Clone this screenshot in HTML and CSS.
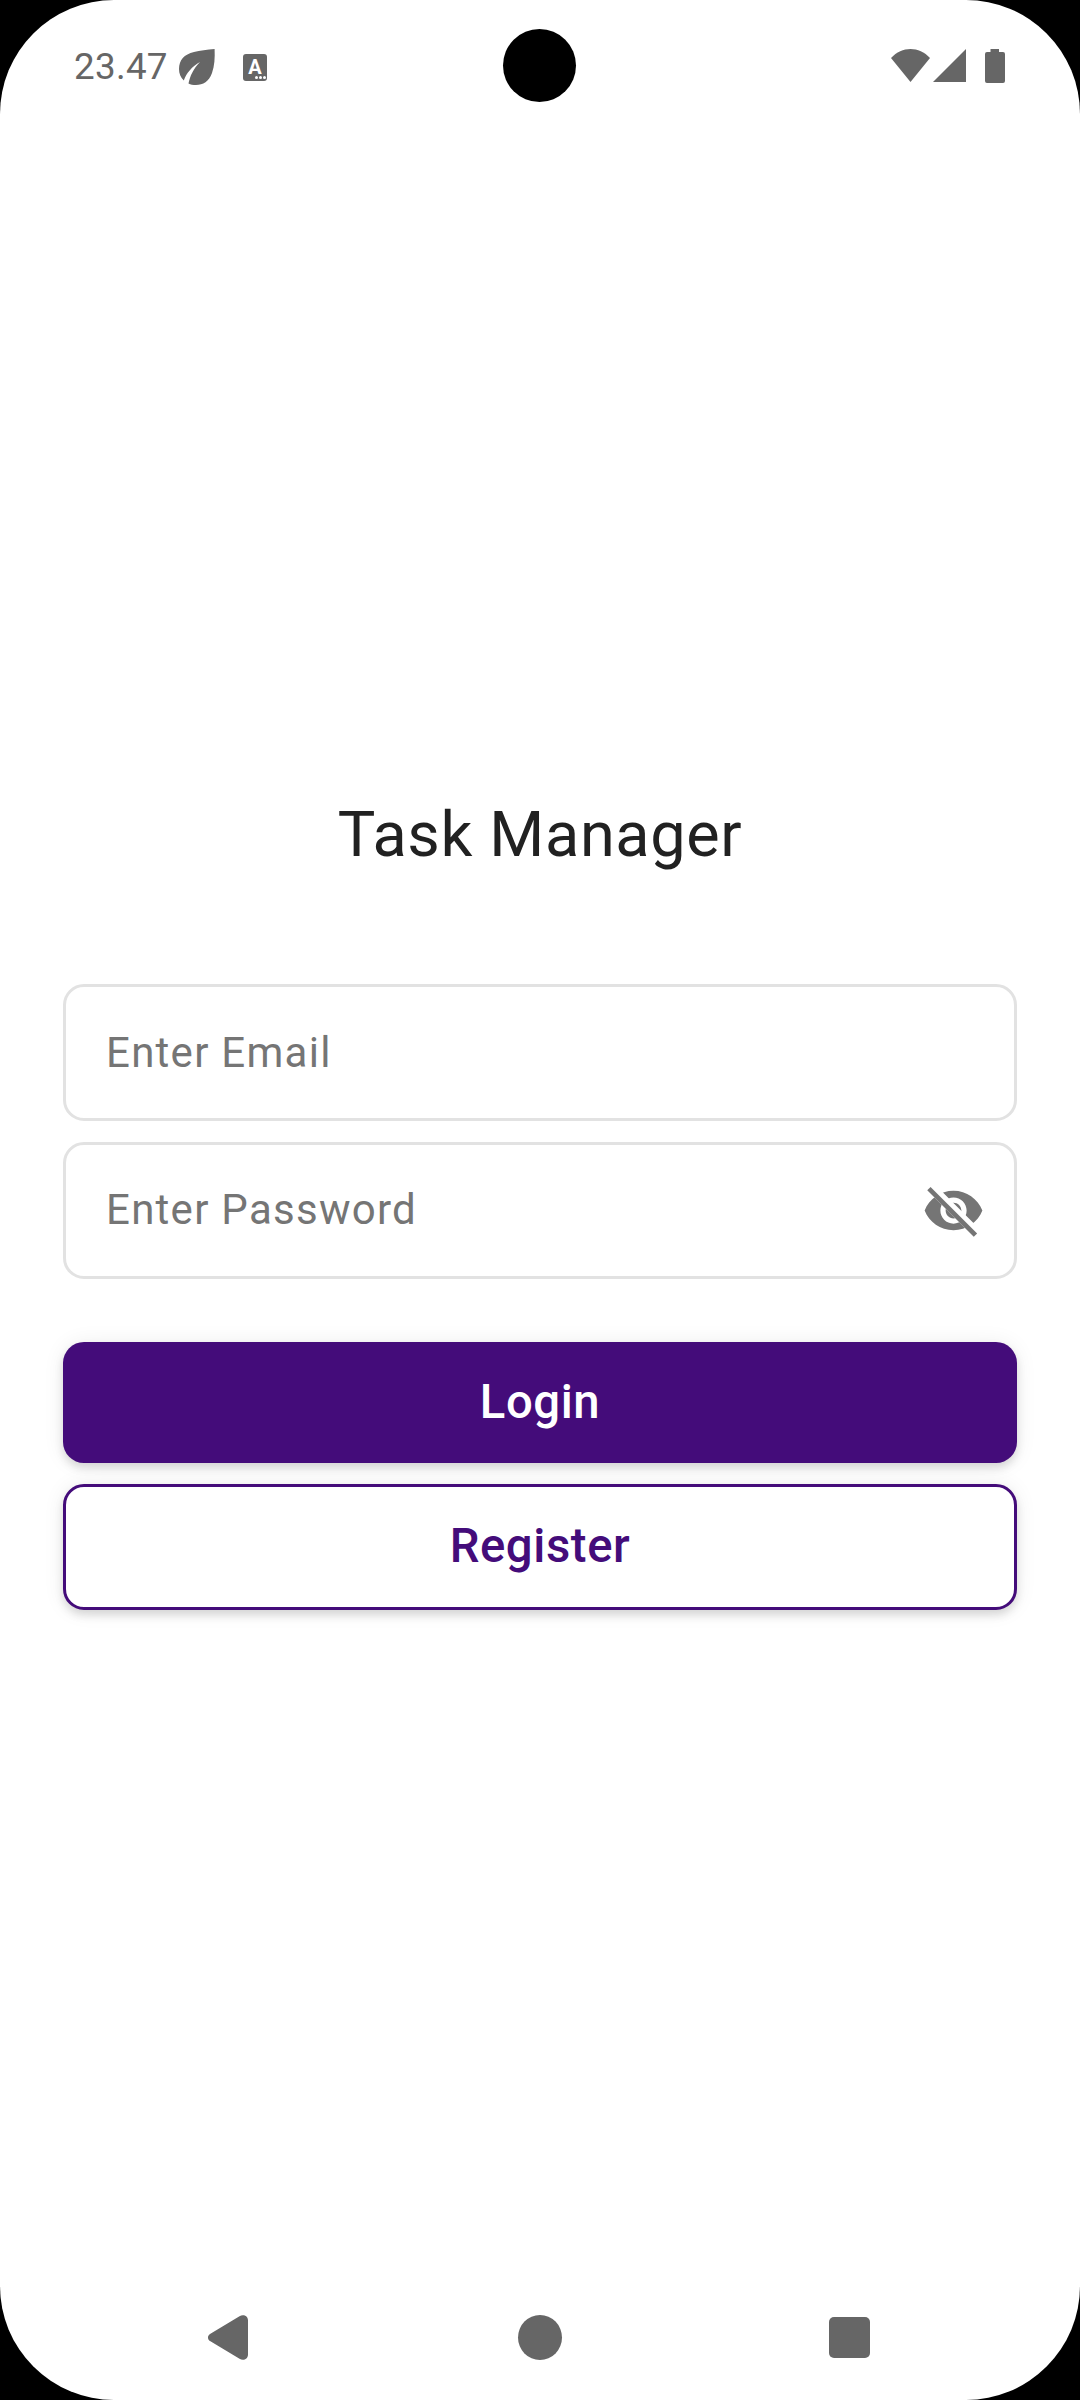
FILE: index.html
```
<!DOCTYPE html>
<html lang="en">
<head>
<meta charset="utf-8">
<title>Task Manager</title>
<link rel="stylesheet" href="styles.css">
</head>
<body>
<div class="screen">
  <header class="status-bar">
    <div class="status-left">
      <span class="clock">23.47</span>
      <svg class="leaf" viewBox="0 0 36 36"><path d="M35.600 0C36 9 35.500 17 33 24C30 32.500 24 36 17 36C14 36 11.500 35.500 9.500 34.500C11 27 14.500 19.500 21 13C13 17.500 7.500 24 4.800 31.500C1.500 28.500 0 24.500 0 20C0 11 5 5.500 15 3C21 1.500 28 .6 35.600 0Z"/></svg>
      <span class="keyboard-badge"><span class="badge-letter">A</span><span class="badge-dots"><i></i><i></i><i></i></span></span>
    </div>
    <div class="camera"></div>
    <div class="status-right">
      <svg class="wifi" viewBox="0 0 39 33"><path d="M0 9C11-3 28-3 39 9L19.500 33Z"/></svg>
      <svg class="signal" viewBox="0 0 33 33"><path d="M33 0V33H0Z"/></svg>
      <svg class="battery" viewBox="0 0 20 34"><path d="M5.500 0H14V3H18Q20 3 20 5V32Q20 34 18 34H2Q0 34 0 32V5Q0 3 2 3H5.500Z"/></svg>
    </div>
  </header>

  <main class="login">
    <h1 class="title">Task Manager</h1>
    <form class="form">
      <div class="field"><input class="input" type="email" placeholder="Enter Email"></div>
      <div class="field">
        <input class="input input-password" type="password" placeholder="Enter Password">
        <svg class="eye" viewBox="0 0 24 24">
          <defs><clipPath id="eye-clip"><path clip-rule="evenodd" d="M0 0H24V24H0ZM2 4.270L19.730 22L22.270 19.460L4.540 1.730Z"/></clipPath></defs>
          <path clip-path="url(#eye-clip)" d="M12 4.500C7 4.500 2.730 7.610 1 12c1.730 4.390 6 7.500 11 7.500s9.270-3.110 11-7.500c-1.730-4.390-6-7.500-11-7.500zM12 17c-2.760 0-5-2.240-5-5s2.240-5 5-5 5 2.240 5 5-2.240 5-5 5zM12 9c-1.660 0-3 1.340-3 3s1.340 3 3 3 3-1.340 3-3-1.340-3-3-3z"/>
          <path d="M2 4.270L3.270 3L21 20.730L19.730 22Z"/>
        </svg>
      </div>
      <button class="button button-primary" type="button">Login</button>
      <button class="button button-outline" type="button">Register</button>
    </form>
  </main>

  <nav class="nav-bar">
    <svg class="nav-back" viewBox="0 0 40 45"><path d="M31.500 1.200C35 -1 40 .5 40 5.500V39.500C40 44.500 35 46 31.500 43.800L2 26C-.7 24-.7 21 2 19Z"/></svg>
    <span class="nav-home"></span>
    <span class="nav-recent"></span>
  </nav>
</div>
</body>
</html>
```
FILE: styles.css
```
* { box-sizing: border-box; }

body {
  margin: 0;
  background: #000;
  font-family: Roboto, sans-serif;
}

.screen {
  width: 1080px;
  height: 2400px;
  display: flex;
  flex-direction: column;
  background: #fff;
  border-radius: 114px;
  overflow: hidden;
}

svg { display: block; fill: currentColor; }

.status-bar {
  height: 131px;
  display: grid;
  grid-template-columns: 1fr 73px 1fr;
  align-items: center;
  padding: 0 75px 0 74px;
  color: #666;
}

.status-left { display: flex; align-items: center; }
.clock { width: 105px; padding-top: 2px; font-size: 36.750px; line-height: 44px; letter-spacing: 0.3px; }
.leaf { width: 36px; height: 36px; margin-top: 3px; }

.keyboard-badge {
  width: 24px;
  height: 27px;
  margin: 3px 0 0 28px;
  display: flex;
  flex-direction: column;
  align-items: center;
  border-radius: 3px;
  background: #666;
  color: #fff;
}

.badge-letter { height: 22px; font-size: 20px; line-height: 26px; font-weight: 700; }
.badge-dots { display: flex; align-self: flex-end; gap: 1px; margin-right: 1px; }
.badge-dots i { width: 3px; height: 3px; border-radius: 50%; background: #fff; }

.camera { width: 73px; height: 73px; border-radius: 50%; background: #000; }

.status-right { display: flex; justify-content: flex-end; align-items: flex-start; }
.wifi { width: 39px; height: 33px; }
.signal { width: 33px; height: 33px; margin: 0 19px 0 3px; }
.battery { width: 20px; height: 34px; }

.login { flex: 1; padding: 662px 63px 0; }

.title {
  margin: 0;
  text-align: center;
  font-size: 63px;
  line-height: 84px;
  font-weight: 400;
  letter-spacing: 0.65px;
  color: #212121;
}

.form { display: flex; flex-direction: column; margin-top: 107px; }

.field {
  height: 137px;
  margin-bottom: 21px;
  display: flex;
  align-items: center;
  padding: 0 29px 0 40px;
  border: 3px solid #e2e2e2;
  border-radius: 21px;
}

.input {
  flex: 1;
  height: 60px;
  padding: 0;
  border: 0;
  outline: 0;
  background: transparent;
  font: 400 42px/60px Roboto, sans-serif;
  letter-spacing: 1.270px;
}

.input-password { margin-bottom: 2px; }
.input::placeholder { color: #757575; opacity: 1; }
.eye { width: 63px; height: 63px; color: #757575; }

.button {
  padding: 0;
  border: 0;
  border-radius: 21px;
  font: 500 47.250px/56px Roboto, sans-serif;
  letter-spacing: 0.6px;
  box-shadow: 0 5px 8px rgba(0, 0, 0, 0.13), 0 1px 22px rgba(0, 0, 0, 0.07);
}

.button-primary { height: 121px; margin-top: 42px; padding-bottom: 2px; background: #440c7a; color: #fff; }
.button-outline {
  height: 126px;
  margin-top: 21px;
  padding-bottom: 2px;
  border: 3px solid #440c7a;
  background: #fff;
  color: #440c7a;
}

.nav-bar {
  height: 126px;
  display: flex;
  align-items: center;
  padding: 0 210px 0 208px;
  justify-content: space-between;
  color: #666;
}

.nav-back { width: 40px; height: 45px; }
.nav-home { width: 44px; height: 45px; margin-right: -2px; border-radius: 50%; background: #666; }
.nav-recent { width: 41px; height: 41px; border-radius: 5px; background: #666; }
```
